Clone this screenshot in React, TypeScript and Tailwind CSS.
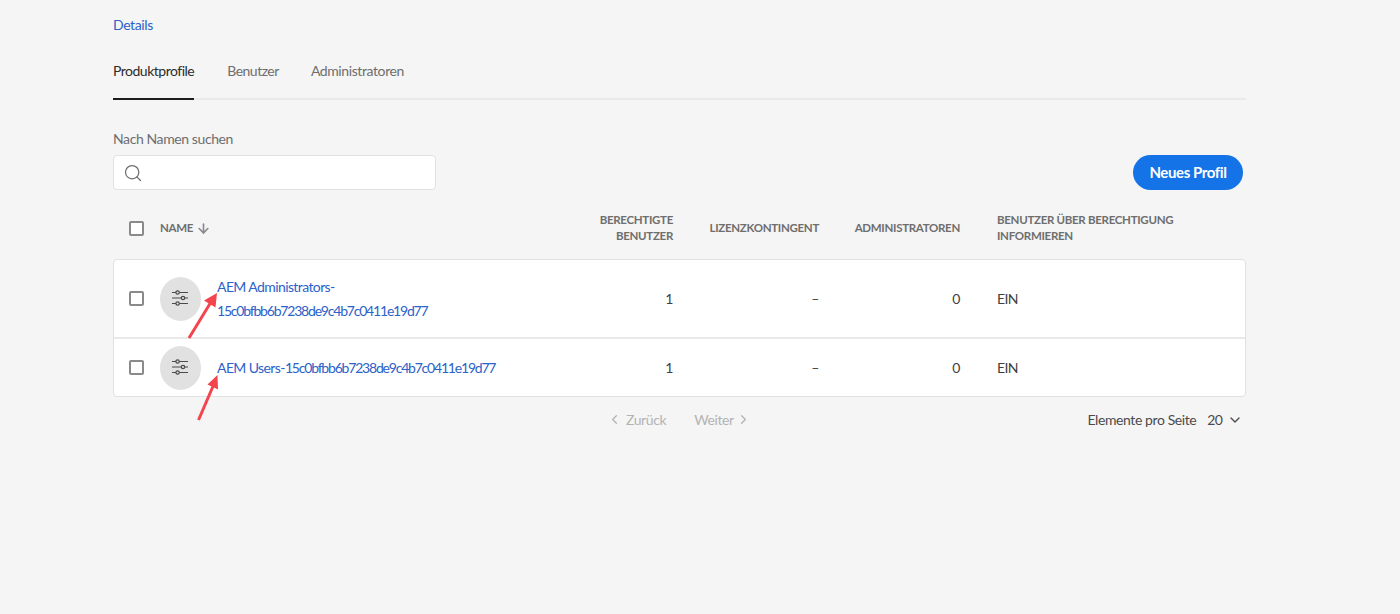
import React from "react";
import { ChevronDown, ChevronLeft, ChevronRight, ArrowDown, Search } from "lucide-react";

interface Profile {
  id: number;
  prefix: string;
  hash: string;
  users: string;
  quota: string;
  admins: string;
  notify: string;
}

const profiles: Profile[] = [
  {
    id: 1,
    prefix: "AEM Administrators-",
    hash: "15c0bfbb6b7238de9c4b7c0411e19d77",
    users: "1",
    quota: "–",
    admins: "0",
    notify: "EIN",
  },
  {
    id: 2,
    prefix: "AEM Users-",
    hash: "15c0bfbb6b7238de9c4b7c0411e19d77",
    users: "1",
    quota: "–",
    admins: "0",
    notify: "EIN",
  },
];

const CheckBox = () => (
  <span className="block w-[15px] h-[15px] rounded-[2px] border-2 border-[#8a8a8a] bg-white shrink-0" />
);

const SlidersIcon = () => (
  <svg width="18" height="18" viewBox="0 0 18 18" fill="none" stroke="#4b4b4b" strokeWidth="1.2">
    <path d="M1 3.5h4M8.2 3.5H17M1 9h9.5M13.6 9H17M1 14.5h4M8.2 14.5H17" />
    <circle cx="6.6" cy="3.5" r="1.7" />
    <circle cx="12" cy="9" r="1.7" />
    <circle cx="6.6" cy="14.5" r="1.7" />
  </svg>
);

const App: React.FC = () => {
  return (
    <div className="min-h-[614px] bg-[#f5f5f5] font-['Lato',sans-serif] text-[14px] tracking-[-0.4px] text-[#4b4b4b]">
      <div className="relative ml-[113px] w-[1133px]">
        <div className="pt-[16px] h-[47px]">
          <a className="text-[#2c62c9] leading-[18px] block">Details</a>
        </div>

        {/* tabs */}
        <div className="flex h-[53px] border-b-2 border-[#e9e9e9]">
          <div className="h-[53px] pt-[14px] border-b-2 border-[#1c1c1c] text-[#2c2c2c] leading-[20px] tracking-[-0.5px]">
            Produktprofile
          </div>
          <div className="ml-[33px] pt-[14px] text-[#6e6e6e] leading-[20px] tracking-[-0.5px]">Benutzer</div>
          <div className="ml-[32px] pt-[14px] text-[#6e6e6e] leading-[20px]">Administratoren</div>
        </div>

        {/* search + button */}
        <div className="flex justify-between items-end mt-[29px] pr-[3px]">
          <div>
            <div className="text-[#6e6e6e] leading-[20px] mb-[6px]">Nach Namen suchen</div>
            <div className="flex items-center w-[323px] h-[35px] bg-white border border-[#e1e1e1] rounded-[4px] pl-[9px]">
              <Search size={20} strokeWidth={1.5} color="#6e6e6e" />
            </div>
          </div>
          <button className="w-[110px] h-[35px] rounded-full bg-[#1473e6] text-white text-[15px] font-bold tracking-[-0.4px]">
            Neues Profil
          </button>
        </div>

        {/* table head */}
        <div className="flex items-center h-[40px] mt-[18px] text-[11.5px] leading-[16px] font-bold tracking-[-0.3px] text-[#6e6e6e]">
          <div className="flex items-center w-[486px] pl-[16px]">
            <CheckBox />
            <span className="ml-[16px]">NAME</span>
            <ArrowDown size={15} strokeWidth={2.6} color="#8a8a8a" className="ml-[3px]" />
          </div>
          <div className="w-[74px] text-right">
            BERECHTIGTE
            <br />
            BENUTZER
          </div>
          <div className="w-[146px] text-right">LIZENZKONTINGENT</div>
          <div className="w-[141px] text-right">ADMINISTRATOREN</div>
          <div className="pl-[37px]">
            BENUTZER ÜBER BERECHTIGUNG
            <br />
            INFORMIEREN
          </div>
        </div>

        {/* table body */}
        <div className="mt-[11px] bg-white border border-[#e1e1e1] rounded-[4px]">
          {profiles.map((profile, i) => (
            <div
              key={profile.id}
              className={`flex items-center ${i === 0 ? "h-[79px] border-b-2 border-[#e9e9e9]" : "h-[57px]"}`}
            >
              <div className="flex items-center w-[485px] pl-[15px]">
                <CheckBox />
                <div className="ml-[16px] w-[41px] h-[44px] rounded-[50%] bg-[#e1e1e1] flex items-center justify-center shrink-0 pr-[1px] pb-[1px]">
                  <SlidersIcon />
                </div>
                <a className="ml-[16px] w-[285px] text-[#2c62c9] leading-[24px] tracking-[-0.6px]">
                  {profile.prefix}
                  <span className="tracking-[-1.2px]">{profile.hash}</span>
                </a>
              </div>
              <div className="w-[74px] text-right text-[#3f3f3f]">{profile.users}</div>
              <div className="w-[146px] text-right text-[#3f3f3f]">{profile.quota}</div>
              <div className="w-[141px] text-right text-[#3f3f3f]">{profile.admins}</div>
              <div className="pl-[37px] text-[#3f3f3f] tracking-[-0.6px]">{profile.notify}</div>
            </div>
          ))}
        </div>

        {/* pagination */}
        <div className="relative flex items-center h-[45px] text-[#6e6e6e]">
          <div className="flex items-center ml-[494px] text-[#b3b3b3]">
            <ChevronLeft size={15} strokeWidth={2} />
            <span className="ml-[4px]">Zurück</span>
            <span className="ml-[28px]">Weiter</span>
            <ChevronRight size={15} strokeWidth={2} className="ml-[2px]" />
          </div>
          <div className="flex items-center ml-auto pr-[3px] text-[#4b4b4b]">
            <span>Elemente pro Seite</span>
            <span className="ml-[11px] tracking-[-0.8px]">20</span>
            <ChevronDown size={16} strokeWidth={2} className="ml-[5px]" />
          </div>
        </div>

        {/* annotations on the screenshot */}
        <svg className="absolute left-[74px] top-[292px] w-[32px] h-[50px]" viewBox="0 0 32 50" fill="none">
          <path d="M2 46 L24 10" stroke="#f4444e" strokeWidth="3" />
          <path d="M30 1 L28.5 15.5 L17 8.5 Z" fill="#f4444e" />
        </svg>
        <svg className="absolute left-[84px] top-[374px] w-[24px] h-[50px]" viewBox="0 0 24 50" fill="none">
          <path d="M1.5 46 L17 10" stroke="#f4444e" strokeWidth="3" />
          <path d="M20.5 1 L21 15.5 L10.5 10.5 Z" fill="#f4444e" />
        </svg>
      </div>
    </div>
  );
};

export default App;
